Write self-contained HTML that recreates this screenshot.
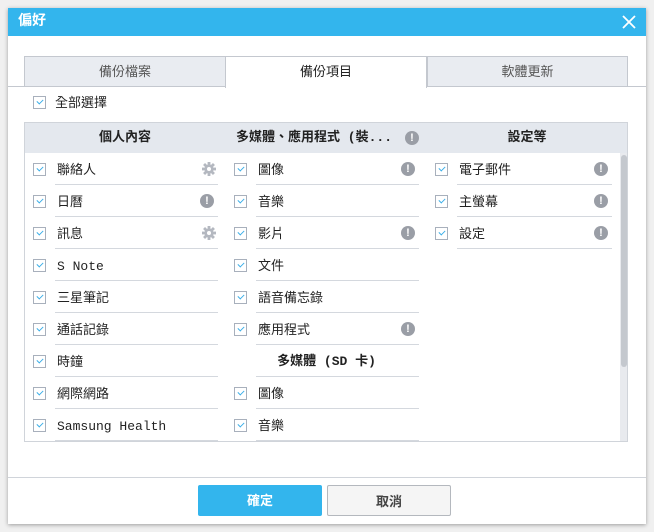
<!DOCTYPE html>
<html><head><meta charset="utf-8"><style>
*{box-sizing:border-box;margin:0;padding:0}
body{width:654px;height:532px;background:#f0f0f0;font-family:"Liberation Mono","Noto Sans CJK TC",monospace;font-size:13px;color:#222;position:relative;overflow:hidden}
.dlg{position:absolute;left:8px;top:8px;width:638px;height:516px;background:#fff;box-shadow:0 1px 4px rgba(0,0,0,.35)}
.title{height:28px;background:#33b5ed;color:#fff;font-weight:bold;font-size:14px;line-height:28px;padding-left:10px}
.x{position:absolute;right:10px;top:7px;width:14px;height:14px}
.tab{position:absolute;top:48px;height:31px;border:1px solid #c4c8cf;border-bottom:none;background:#e9ecf1;text-align:center;line-height:32px;color:#555;font-size:13px}
.tab.on{background:#fff;color:#222;height:32px}
.tline{position:absolute;left:0;right:0;top:78px;border-top:1px solid #c4c8cf}
.cb{position:absolute;width:13px;height:13px;border:1px solid #a8b0bc;background:#fff}
.cb:after{content:"";position:absolute;left:3px;top:2px;width:5px;height:3px;border-left:1.5px solid #3aaee8;border-bottom:1.5px solid #3aaee8;transform:rotate(-45deg)}
.box{position:absolute;left:16px;top:114px;width:604px;height:320px;border:1px solid #d0d4da;overflow:hidden}
.hdr{position:absolute;left:0;top:0;width:604px;height:30px;background:#e4e8ee}
.h{position:absolute;top:0;line-height:30px;font-weight:bold;text-align:center}
.row{position:absolute;height:32px}
.row .t{position:absolute;left:24px;top:2px;line-height:31px}
.row .sep{position:absolute;left:22px;right:0;bottom:0;border-top:1px solid #d4d8de}
.ex{position:absolute;width:14px;height:14px;border-radius:50%;background:#9a9ea6;color:#fff;font:bold 11px/14px "Liberation Sans",sans-serif;text-align:center}
.gear{position:absolute;width:14px;height:14px}
.sb{position:absolute;left:595px;top:30px;width:8px;height:290px;background:#e8eaee}
.sb i{position:absolute;left:1px;top:2px;width:6px;height:212px;background:#c4c8ce;border-radius:3px}
.fline{position:absolute;left:0;right:0;top:469px;border-top:1px solid #d0d4da}
.btn{position:absolute;top:477px;width:124px;height:31px;text-align:center;line-height:34px;font-weight:bold;font-size:13px;border-radius:2px}
</style></head><body>
<div class="dlg">
<div class="title">偏好</div>
<svg class="x" viewBox="0 0 14 14"><path d="M1 1L13 13M13 1L1 13" stroke="#fff" stroke-width="1.8"/></svg>
<div class="tab" style="left:16px;width:202px">備份檔案</div>
<div class="tab" style="left:419px;width:201px">軟體更新</div>
<div class="tline"></div>
<div class="tab on" style="left:217px;width:202px">備份項目</div>
<div class="cb" style="left:25px;top:88px"></div>
<div style="position:absolute;left:47px;top:86px;line-height:20px">全部選擇</div>
<div class="box">
<div class="hdr"></div>
<div class="h" style="left:0;width:200px">個人內容</div>
<div class="h" style="left:200px;width:200px;text-align:left;padding-left:11px">多媒體、應用程式 (裝...</div>
<div class="ex" style="left:380px;top:8px">!</div>
<div class="h" style="left:402px;width:200px">設定等</div>
<div class="sb"><i></i></div>
<div id="rows"></div>
</div>
<div class="fline"></div>
<div class="btn" style="left:190px;background:#33b5ed;color:#fff">確定</div>
<div class="btn" style="left:319px;background:#f5f5f5;border:1px solid #b4b8be;color:#444">取消</div>
</div>
<script>
var c1=[["聯絡人","g"],["日曆","e"],["訊息","g"],["S Note"],["三星筆記"],["通話記錄"],["時鐘"],["網際網路"],["Samsung Health"]];
var c2=[["圖像","e"],["音樂"],["影片","e"],["文件"],["語音備忘錄"],["應用程式","e"],["H多媒體 (SD 卡)"],["圖像"],["音樂"]];
var c3=[["電子郵件","e"],["主螢幕","e"],["設定","e"]];
var G='<svg class="gear" style="right:2px;top:9px" viewBox="0 0 14 14"><g fill="#b4b8c0"><circle cx="7" cy="7" r="4.6"/><rect x="5.6" y="0" width="2.8" height="14"/><rect x="0" y="5.6" width="14" height="2.8"/><rect x="5.6" y="0" width="2.8" height="14" transform="rotate(45 7 7)"/><rect x="5.6" y="0" width="2.8" height="14" transform="rotate(-45 7 7)"/></g><circle cx="7" cy="7" r="2" fill="#fff"/></svg>';
var R=document.getElementById('rows'),h='';
function col(a,x,w){a.forEach(function(r,i){var y=30+i*32;
if(r[0][0]=='H'){h+='<div class="h" style="left:'+x+'px;width:'+w+'px;top:'+(y+1)+'px;line-height:32px">'+r[0].slice(1)+'</div><div class="row" style="left:'+(x+8)+'px;top:'+y+'px;width:'+(w-16)+'px"><div class="sep"></div></div>';return;}
h+='<div class="row" style="left:'+(x+8)+'px;top:'+y+'px;width:'+(w-16)+'px"><div class="cb" style="left:0;top:10px"></div><div class="t">'+r[0]+'</div><div class="sep"></div>';
if(r[1]=='e')h+='<div class="ex" style="right:4px;top:9px">!</div>';
if(r[1]=='g')h+=G;
h+='</div>';});}
col(c1,0,201);col(c2,201,201);col(c3,402,193);R.innerHTML=h;
</script>
</body></html>
